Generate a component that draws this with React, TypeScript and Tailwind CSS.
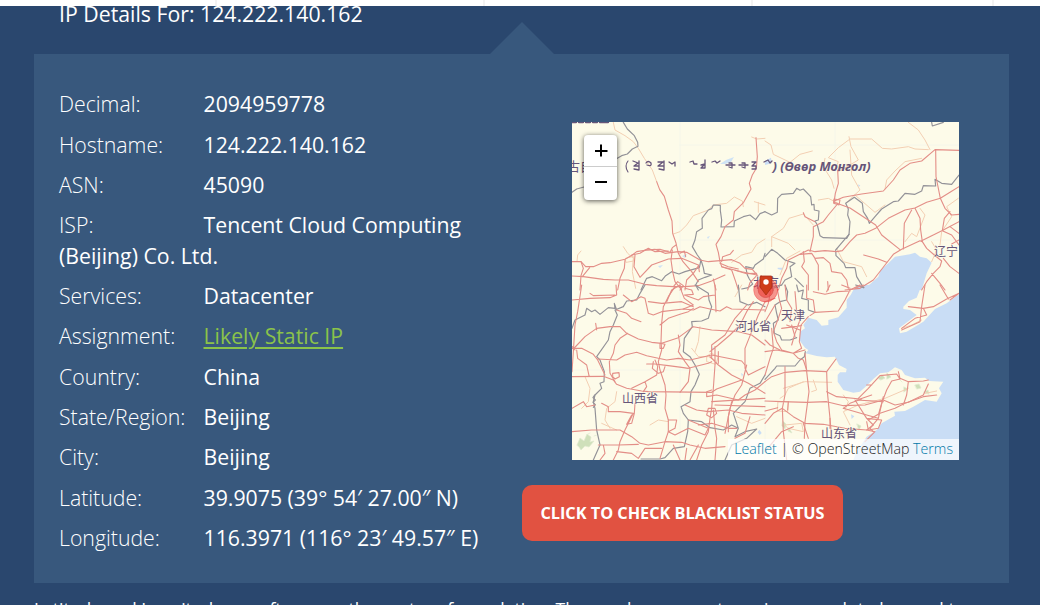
import React from "react";

const rows: { label: string; value: string; link?: boolean }[] = [
  { label: "Decimal:", value: "2094959778" },
  { label: "Hostname:", value: "124.222.140.162" },
  { label: "ASN:", value: "45090" },
  { label: "ISP:", value: "Tencent Cloud Computing (Beijing) Co. Ltd." },
  { label: "Services:", value: "Datacenter" },
  { label: "Assignment:", value: "Likely Static IP", link: true },
  { label: "Country:", value: "China" },
  { label: "State/Region:", value: "Beijing" },
  { label: "City:", value: "Beijing" },
  { label: "Latitude:", value: "39.9075 (39° 54′ 27.00″ N)" },
  { label: "Longitude:", value: "116.3971 (116° 23′ 49.57″ E)" },
];

/* Each map quadrant is drawn at three units per pixel. */
const quadrants = [
  {
    at: "translate(-7 -7) scale(.33333)",
    minor: [
      "M145 22L150 45L180 62L205 80L220 100L238 130L262 165L275 200",
      "M325 357L345 350L365 330L385 302L430 285L445 270L485 265L508 246L532 258L535 275",
      "M600 70L575 72L560 66M568 260L600 270M580 262L580 292",
      "M600 372L575 388L560 412L530 420L500 442",
      "M48 408L38 420L36 440M175 395L188 415L205 430L202 470L212 520M182 430L205 424L206 438L184 442Z",
    ],
    roads: [
      "M275 200L284 224L298 244L310 285L321 318L323 355L333 384L340 415L354 440L380 470L400 500",
      "M573 68L577 125L574 160L562 180L553 205L558 222L536 262L508 290L505 315L480 335L468 365L453 388L460 412L465 440L470 455L530 470L575 480",
      "M21 440L48 440L62 455L85 455L110 445L135 443L180 433L202 420L215 410L245 405L270 403L300 415L340 410L365 412L405 435L430 440L500 434L525 445L540 460L562 463L578 482",
      "M21 483L55 485L115 493L150 495L190 495L240 508L275 512L325 515L360 515L400 512L440 498L480 480",
      "M48 440L55 460L48 482L45 525M74 458L52 485M180 435L178 460L165 490L158 525",
      "M210 420L207 455L225 487L260 450L310 432L350 430L400 450L403 470",
      "M240 405L285 403L315 412L322 398L333 390M322 405L318 435L323 470L330 500L350 525",
      "M345 415L358 408L362 425M470 440L473 425L495 418L505 406M470 455L500 465L512 500L520 525M465 445L490 455L520 462",
      "M360 525L365 495L385 475L402 450M200 420L225 415L250 400L270 410L310 408M445 492L453 525M325 515L338 500L355 512L345 525",
      "M575 482L555 503L548 525M510 466L545 476L575 475",
    ],
    borders: [
      "M175 22L187 42L208 62L218 82L219 94L202 102L187 117L170 122L157 130",
      "M21 232L35 222L57 216",
      "M600 290L585 296L572 314L555 300L535 305L508 318L507 335L468 336L470 315L466 287L466 271L445 270L440 281L430 285L411 310L412 340L395 350L390 375L382 395L397 420L408 435L403 458L360 470L342 477L320 470L302 482L290 497L262 485L245 490L235 510L228 525",
      "M408 435L415 458L418 475L440 480L420 487L400 495L392 510L400 525",
      "M600 415L595 432L570 450L565 460L542 455L547 480L553 492L563 507L550 518L530 522",
    ],
    water: [],
  },
  {
    at: "translate(193 -7) scale(.33333)",
    minor: [
      "M0 78L18 90L25 118L75 142L105 118L142 108M210 165L220 140L190 128L220 98L255 72L320 72L352 100L380 102L430 95L450 102L490 104M252 65L258 95L280 135L220 170",
      "M430 22L460 45L480 75L495 104M180 130L175 155L200 195L207 220M255 105L260 180L285 225L245 262M360 222L365 195L390 168L420 140L470 130",
      "M20 395L20 365L55 340L72 310L115 297L145 330M220 265L190 250L160 255M270 240L330 292L360 270M420 380L440 355L455 365L480 300L465 280M580 250L545 275L560 305L530 350L525 390",
      "M20 365L70 385L90 405M45 480L65 430L105 408M215 400L235 440L290 455L305 485M500 380L515 405L500 440",
    ],
    roads: [
      "M218 165L220 205L211 235L207 262L230 270L255 279L305 312L332 330L350 360L405 404",
      "M208 258L235 247L290 237L355 228L385 195L405 165L435 145L470 138L510 104L582 106M512 104L513 185L518 210L526 250",
      "M582 215L555 232L526 250L485 262L450 279L420 285L370 310L332 340L300 355L275 360L255 380L232 407L215 410L180 407L150 410L130 405L100 420L70 435L65 460L50 490L40 525",
      "M450 280L465 310L467 345L472 380L465 377L410 403L385 418L360 450L325 495L285 520L240 525",
      "M440 285L418 325L415 402M470 377L535 345L582 320M526 250L540 280L560 300L582 298M555 290L538 310L532 347L560 360L582 390",
      "M215 270L190 300L175 320L145 335L145 365L135 410M115 293L120 305L150 320M115 410L118 440L110 455L130 480L130 525",
      "M105 418L140 415L150 430L175 428L195 445L200 470L230 475L245 495L250 520M150 432L160 450L160 525M188 500L190 525",
      "M296 420L340 432L365 442M472 380L485 400L508 420L530 438L525 455L505 475L485 500L470 525M535 430L555 455L582 475M500 475L525 505L540 525M582 355L555 335M582 375L560 387",
      "M207 252L225 255L222 270L206 265Z",
    ],
    borders: [
      "M0 290L20 300L37 292L38 250L50 238L85 235L95 220L105 226L115 222L137 245L140 270L147 268L148 285L162 288L160 315L150 318L157 330L165 362L175 368L245 370L252 358L255 320L248 300L250 282L242 265L268 247L292 265L295 290L308 310L313 325L330 305L350 282L385 260L400 258L420 235L450 238L470 228L475 212L512 213L510 193L530 205L560 208L582 180",
      "M500 22L502 33L535 22M252 358L225 390L212 405L213 422L237 445L242 458L270 458L275 485L295 518",
      "M0 425L20 403L38 415L60 435L90 445L75 455L80 485L60 495L50 510L25 515M90 490L115 515",
    ],
    water: [
      "M285 525L315 508L340 485L347 465L370 445L390 425L435 418L450 413L465 425L485 430L500 443L485 475L470 525Z",
      "M0 138L18 128L20 145L0 150ZM38 458L57 458L50 465L38 462ZM280 208L286 212L280 216Z",
    ],
  },
  {
    at: "translate(-7 163) scale(.33333)",
    minor: [
      "M155 320L150 350L125 370L120 405L135 430M60 275L75 310L70 350L50 370M380 190L400 215L430 215L450 225M405 125L400 170L390 200M255 420L280 405L310 410M440 205L460 215L452 238L425 230L425 215Z",
      "M155 435L110 415M530 0L510 35M515 395L560 415L600 400",
    ],
    roads: [
      "M50 0L38 80L30 120L25 200L21 260M21 45L75 40L135 38L155 30L153 0M75 25L85 32L150 30",
      "M25 192L60 155L95 130L135 125L165 125L185 145L220 162L260 172L290 175L340 158L385 125L440 135L520 140L560 150L600 180",
      "M21 190L50 190L85 208L98 225L120 270M35 195L38 220L65 240L72 272M21 275L115 274L145 285L155 298L185 310L230 318L250 320L440 322L455 312L530 285",
      "M30 195L22 185M92 115L95 135M155 75L185 85L200 100L228 110M175 30L200 50L228 35L240 40L250 85L265 90L290 80L355 72L385 75L405 65L435 72L465 78L485 65L500 72L600 75",
      "M250 50L290 55L350 50L385 65M330 5L310 35L295 65L290 115L288 170L290 195L280 230L285 255L300 300L303 330L300 370L310 405L310 440L300 470L285 520",
      "M355 72L385 60L358 40L350 20L345 0M360 10L380 15L385 28L358 30L400 45L415 35L450 30M450 0L453 80M385 70L370 80L345 88L310 100L285 120",
      "M188 145L165 160L150 180L145 205L133 230L135 265L150 290M98 222L155 225L180 210L215 202L245 212L280 220L305 225L340 220L375 225L440 210L530 228L540 240",
      "M340 150L345 180L340 200L360 230L375 250L370 290L345 322M285 175L300 178L295 190L285 190ZM245 237L270 237L310 242L350 247L370 250L430 235L440 230",
      "M270 225L278 245L275 270L240 290L200 310M265 230L262 250L280 265L295 260L300 245M240 290L245 305L235 320M143 265L162 263L163 275L150 282L143 275Z",
      "M435 200L460 180L495 150L525 120L545 80L565 50M435 215L460 240L500 270L550 295L600 325M450 185L450 240L445 310L440 370L435 400L430 440L410 480L395 525",
      "M440 220L440 180L480 150L510 100L545 60M460 200L460 235M600 50L580 90L560 140L540 190L540 250L550 270L600 245M545 240L530 300L510 330L495 370L485 420L480 445",
      "M600 290L570 315L540 330L520 345L455 330L425 335L425 320L440 315M360 360L395 375L430 380L490 375L530 385L600 390M430 370L450 370L455 385L440 398L425 390Z",
      "M110 355L130 365L130 380L165 380L205 385M210 355L208 385L200 415L185 418L200 390M205 385L180 435L165 470L160 495L145 525",
      "M21 440L80 435L130 435L165 435L200 455L225 475L250 480L300 470L350 472L375 480L420 490L480 485M21 370L55 350L65 365L90 360",
      "M310 405L335 405L330 430L310 440M100 480L160 480L220 478M105 525L120 505L115 480M155 500L200 505L220 520L240 490L290 490M370 405L430 430L420 450L370 430L330 450L310 440M345 0L320 15L305 50M400 420L440 415L490 430L515 430M445 375L450 430L455 460L450 525M500 350L490 395L490 440",
      "M325 480L345 525M365 490L360 525M400 480L375 525M440 350L600 340M450 360L600 365M555 395L540 445L510 460",
    ],
    borders: [
      "M240 0L225 25L215 45L185 48L175 65L150 75L157 90L145 120L135 140L130 165L95 215L105 225L118 260L117 290L105 295L110 310L90 330L85 350L90 370L95 435L105 480L85 525",
      "M21 130L30 105L60 90L65 70L80 80L90 75L105 88L130 68L150 70L148 55L155 75",
      "M390 0L430 25L432 45L440 65L430 100L410 108L380 110L382 125L358 160L355 200L375 215L390 240L403 268L390 300L378 320L375 350L348 365L355 385L370 405L368 440L358 485L325 490L300 518L285 522L228 522",
      "M370 405L410 410L435 428L475 435L500 420L520 430L505 385L525 365L540 350L555 310L585 295L600 270M520 430L510 455L540 440L575 432L545 460L500 480L480 525",
      "M520 0L525 50L550 60L575 52L600 65M89 330L84 338L91 345L84 352L91 359L85 367",
    ],
    water: ["M578 442L583 434L590 444L584 450ZM440 192L444 185L448 195ZM528 264L534 268L531 276Z"],
  },
  {
    at: "translate(193 163) scale(.33333)",
    minor: [
      "M115 290L70 310L60 330L45 340M145 285L155 315L140 320M240 375L250 350L235 330M255 420L235 380L280 360L360 340L430 310M55 310L120 290L200 292M480 325L515 318M410 130L440 120L470 105",
      "M40 350L70 350L68 380L38 378ZM60 420L110 415L115 440L70 430Z",
    ],
    roads: [
      "M0 290L20 275L60 262L120 257L185 260L213 222M60 245L60 330L52 370L55 440L65 525M0 348L50 350L125 352L185 350L235 362L300 360L355 345L390 360L430 352L475 330L490 297",
      "M120 205L125 260L132 320L120 410L118 460M185 260L187 320L195 400L195 430M185 320L215 335L285 342L320 330M235 370L305 390L340 400M275 345L355 350M355 335L340 400L315 430L325 440",
      "M280 340L310 310L345 272L395 267L405 282L380 288L365 315L350 355L340 390M400 260L405 280L430 290L475 288L490 285M430 290L425 330L415 360M310 405L345 385L390 370L420 355L475 335L515 330M305 300L320 300",
      "M0 415L25 385L52 370L85 395L120 415L175 418L240 430L305 435L325 420L305 400L270 345M235 370L255 355L290 342M0 378L38 368M70 350L68 375M305 400L350 405L340 430L310 435L305 410",
      "M285 0L255 15L240 45L220 78L150 82L135 92M145 20L180 28L215 20L255 18M150 82L145 45L125 40L125 0M195 0L185 20M255 10L230 0",
      "M35 0L42 40L50 70L40 100L25 140L35 170L50 195L85 205L120 195M0 200L35 195L85 205L110 190L103 170L108 120L130 95M50 130L110 122M60 0L65 45L80 70L75 110M90 20L95 80L105 105L90 145L80 180M20 0L10 55L0 80M0 110L30 60M30 40L0 50",
      "M480 0L470 65L465 110L410 135M475 70L505 65L545 42L582 25M525 0L550 42M430 65L475 70M410 130L450 100L485 90L475 70M555 45L582 25M295 0L270 10",
      "M0 165L15 180L45 195M0 270L15 220L25 190L20 130M85 205L100 220L115 225L125 255M80 120L90 155M65 120L105 135",
      "M0 500L50 440L85 425M305 435L330 440L300 470M115 415L130 460M195 400L200 460",
    ],
    borders: [
      "M0 283L30 250L35 243L90 243L105 225L118 215L121 200M25 10L50 0M60 0L68 20L65 45L45 50L30 60L35 85L40 105L25 115L28 145L45 152L50 165L75 165L95 158M95 0L100 20L115 15L110 40L130 45L130 75L150 82",
      "M272 0L297 8",
    ],
    water: [
      "M285 0L265 15L257 30L245 45L245 68L220 97L190 105L190 120L170 122L155 105L130 98L115 120L120 130L105 140L103 165L120 188L130 195L122 205L155 213L185 217L210 215L222 240L245 252L243 262L225 262L218 270L218 290L235 315L265 323L285 320L305 302L325 282L345 265L370 262L390 247L410 255L420 270L450 280L480 278L493 288L535 290L522 310L530 325L515 350L480 345L445 365L420 378L388 380L390 392L350 415L335 435L305 455L290 478L275 500L265 525L582 525L582 28L545 55L510 72L475 110L450 125L425 140L405 145L402 130L435 105L455 90L435 75L415 72L415 65L432 48L455 38L470 0Z",
      "M258 388L268 394L260 402Z",
    ],
  },
];

const vegetation = [
  "M5 323L8 316L12 319L15 312L19 315L18 320L22 319L17 325L13 324L9 328L7 325Z",
  "M306 256L310 253L313 256L309 258ZM315 251L319 255L315 257Z",
  "M211 299L214 302L213 307L210 304ZM217 306L220 311L216 309Z",
  "M343 263L347 262L349 266L345 267ZM332 265L336 267L332 270ZM285 302L289 304L287 308ZM352 270L356 268L357 272Z",
  "M16 312L18 311M22 314L25 313M327 257L330 260",
];

const mapText = "fill-[#665579] font-['Noto_Sans_CJK_SC','Open_Sans',sans-serif]";

function LocationMap() {
  return (
    <svg
      viewBox="0 0 387 338"
      className="block h-[338px] w-[387px]"
      fill="none"
      strokeLinejoin="round"
      strokeLinecap="round"
    >
      <rect width="387" height="338" fill="#fdfbe9" />
      <path d="M108 0V338M108 23H387M193 120V338M263 0V120M0 248H387M108 118H387" stroke="#f2f6ea" strokeWidth=".8" />
      <g fill="#cfe0ba" stroke="#e0ead0" strokeWidth=".7">
        {vegetation.map((d) => (
          <path key={d} d={d} />
        ))}
      </g>
      {quadrants.map((q) => (
        <g key={q.at} transform={q.at} fill="#c9ddf5">
          {q.water.map((d) => (
            <path key={d} d={d} />
          ))}
        </g>
      ))}
      <path d="M148 42L154 38L162 35L159 40L153 42ZM110 134L115 132L113 136ZM86 144L91 143L88 146ZM135 115L138 114L136 117Z" fill="#cfe3f5" />
      {quadrants.map((q) => (
        <g key={q.at} transform={q.at}>
          <g stroke="#f3cfb3" strokeWidth="3">
            {q.minor.map((d) => (
              <path key={d} d={d} />
            ))}
          </g>
          <g stroke="#939298" strokeWidth="3.5">
            {q.borders.map((d) => (
              <path key={d} d={d} />
            ))}
          </g>
          <g stroke="#e38e87" strokeWidth="3.3">
            {q.roads.map((d) => (
              <path key={d} d={d} />
            ))}
          </g>
        </g>
      ))}

      <g className={mapText} stroke="#fdfbe9" strokeWidth="1.2" strokeOpacity=".7" style={{ paintOrder: "stroke" }}>
        <text x="-5" y="49" fontSize="13">古自</text>
        <text x="362" y="134" fontSize="12">辽宁</text>
        <text x="163" y="209" fontSize="12">河北省</text>
        <text x="209" y="198" fontSize="12">天津</text>
        <text x="50" y="281" fontSize="12">山西省</text>
        <text x="249" y="316" fontSize="12">山东省</text>
        <text x="181" y="165" fontSize="13">北京</text>
      </g>
      <text
        x="200.5"
        y="48.5"
        fontSize="12"
        fontWeight="700"
        fontStyle="italic"
        textLength="98"
        lengthAdjust="spacingAndGlyphs"
        className="fill-[#665579] font-['Noto_Sans','Open_Sans',sans-serif]"
      >
        ) (Өвөр Монгол)
      </text>
      <g stroke="#665579" strokeWidth="1.3">
        <path d="M56 39Q52 44 56 50" strokeWidth="1.1" />
        <path d="M61 39L66 41L62 44L66 44M67 39V48L62 47M74 41Q76 38 79 41Q80 45 75 43M86 40L91 40L86 44L91 44M92 39V48L87 47M97 40L100 42L103 40V44" />
        <path d="M118 40L121 39L122 42L125 42M129 43L133 42L129 46H133V38M140 40L143 39L145 41L148 39M154 43H163M157 41L160 41L160 46L157 45M167 43H176M170 41L173 41L173 46L170 45M180 40H184L180 44H184V47L180 47M192 40L196 38L198 41L200 39" />
        <path d="M0 0H4M7 0H11M14 0H18M21 0H25M28 0H36" strokeWidth="2.4" />
      </g>

      <circle cx="193.7" cy="168" r="12" fill="#ef4444" fillOpacity=".55" stroke="#ef4444" strokeOpacity=".4" />
      <circle cx="193.7" cy="168" r="7.5" fill="#ee3d35" fillOpacity=".6" stroke="#d9534f" strokeWidth=".8" />
      <path d="M189 154H199Q200 154 200 155V165L194 173L188 165V155Q188 154 189 154Z" fill="#cf3d1b" stroke="#a92f17" strokeWidth=".8" />
      <circle cx="194" cy="160" r="2.7" fill="#fff" />
    </svg>
  );
}

function DetailList() {
  return (
    <ul className="w-[463px] pl-[25px] pt-[35.25px] text-[21.28px] leading-[30.5px]">
      {rows.map((r) => (
        <li key={r.label} className="mb-[9.84px]">
          <span className="inline-block w-[144.5px] font-light">{r.label}</span>
          {r.link ? (
            <a href="#" className="text-[#8bc34a] underline decoration-2 underline-offset-[3px]">
              {r.value}
            </a>
          ) : (
            <span>{r.value}</span>
          )}
        </li>
      ))}
    </ul>
  );
}

export default function App() {
  return (
    <div className="flex h-[605px] w-[1040px] flex-col overflow-hidden bg-[#2a476e] font-['Open_Sans',sans-serif] text-white">
      <div className="flex h-[6px] shrink-0 bg-white">
        <div className="w-[217px] border-r-2 border-[#f3f3f3]" />
        <div className="w-[268px] border-r-2 border-[#f3f3f3]" />
        <div className="w-[268px] border-r-2 border-[#f3f3f3]" />
        <div className="w-[241px] border-r-2 border-[#f3f3f3]" />
      </div>
      <header className="relative h-[48px] shrink-0 overflow-hidden">
        <h1 className="-mt-[7px] pl-[59px] text-[21.28px] leading-[30px]">IP Details For: 124.222.140.162</h1>
        <svg className="absolute bottom-0 left-[490px] h-[32px] w-[64px]" viewBox="0 0 64 32">
          <path d="M0 32L32 0L64 32Z" fill="#38587d" />
        </svg>
      </header>
      <main className="ml-[34px] flex h-[529px] w-[975px] shrink-0 bg-[#38587d]">
        <DetailList />
        <section className="ml-[25px] flex flex-col items-start pt-[68px]">
          <div className="relative ml-[50px] h-[338px] w-[387px] overflow-hidden">
            <LocationMap />
            <div className="absolute left-[12px] top-[13px] flex h-[65px] w-[33px] flex-col rounded-[4px] bg-white shadow-[0_1px_5px_rgba(0,0,0,0.65)]">
              <button className="flex h-[32px] items-center justify-center border-b border-[#ccc] pl-[2px]" aria-label="Zoom in">
                <svg className="h-[13px] w-[13px]" viewBox="0 0 13 13">
                  <path d="M6 .5V12.5M0 7H12.5" stroke="#000" strokeWidth="2" />
                </svg>
              </button>
              <button className="flex h-[32px] items-center justify-center pl-[2px]" aria-label="Zoom out">
                <svg className="h-[13px] w-[13px]" viewBox="0 0 13 13">
                  <path d="M0 5H12" stroke="#000" strokeWidth="2" />
                </svg>
              </button>
            </div>
            <div className="absolute bottom-0 right-0 h-[21px] whitespace-nowrap bg-white/70 pl-[6px] pr-[6px] text-[14.2px] font-light leading-[20px] text-[#222]">
              <span className="text-[#0078a8]">Leaflet</span> | © OpenStreetMap <span className="text-[#0078a8]">Terms</span>
            </div>
          </div>
          <button className="mt-[25px] h-[56px] w-[321px] rounded-[10px] bg-[#e15241] text-[16.27px] font-bold">
            CLICK TO CHECK BLACKLIST STATUS
          </button>
        </section>
      </main>
      <p className="mt-[13px] shrink-0 whitespace-nowrap pl-[34px] text-[17.5px] leading-[26px]">
        Latitude and Longitude are often near the center of population. These values are not precise enough to be used to
      </p>
    </div>
  );
}
